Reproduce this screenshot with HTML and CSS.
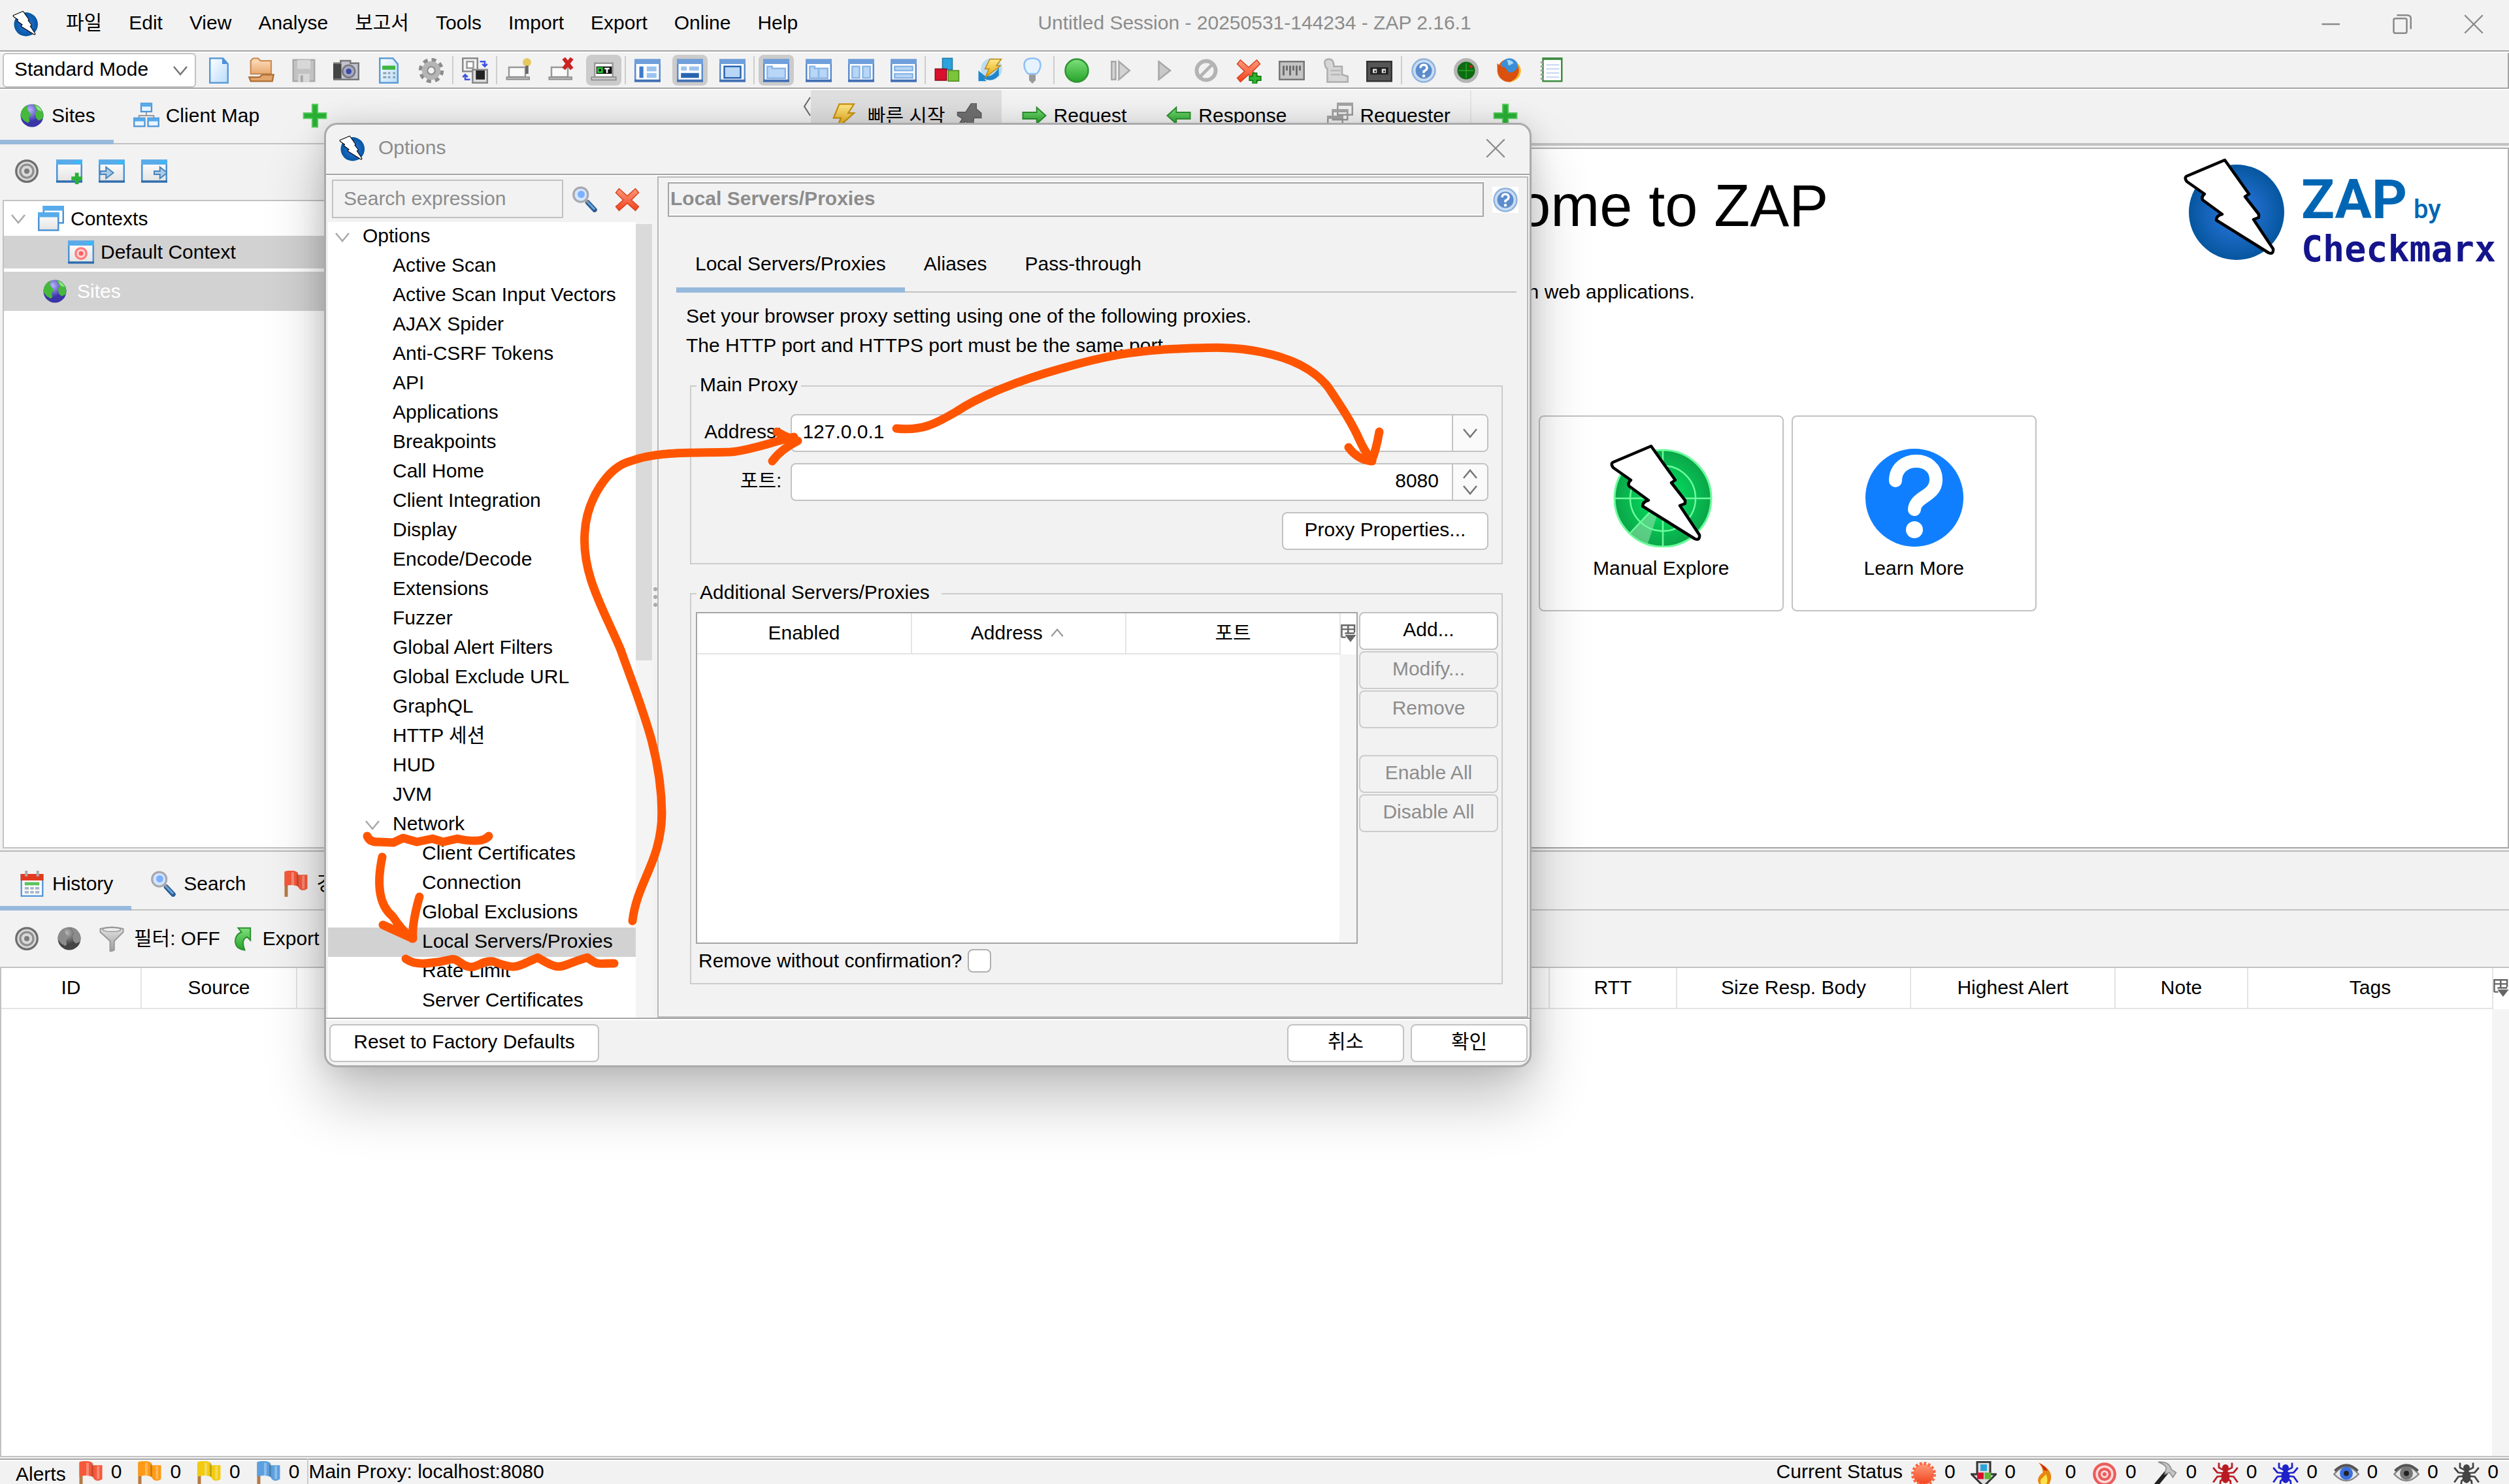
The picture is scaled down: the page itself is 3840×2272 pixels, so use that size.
FILE: index.html
```html
<!DOCTYPE html>
<html lang="ko">
<head>
<meta charset="utf-8">
<title>Untitled Session - 20250531-144234 - ZAP 2.16.1</title>
<link rel="stylesheet" href="styles.css">
</head>
<body>
<svg class="sprite" width="0" height="0" aria-hidden="true">
  <defs>
    <radialGradient id="g-blue"><stop offset="0" stop-color="#2f7be6"/><stop offset="1" stop-color="#05569f"/></radialGradient>
    <radialGradient id="g-radar"><stop offset="0" stop-color="#00ee66"/><stop offset="1" stop-color="#0ba548"/></radialGradient>
    <linearGradient id="g-page" x2="1" y2="1"><stop offset="0" stop-color="#fff"/><stop offset="1" stop-color="#b9dcfb"/></linearGradient>
    <linearGradient id="g-win" y2="1" x2="0"><stop offset="0" stop-color="#fff"/><stop offset="1" stop-color="#e3e3e3"/></linearGradient>
    <linearGradient id="g-green" y2="1" x2="0"><stop offset="0" stop-color="#7ee07a"/><stop offset="1" stop-color="#26a32a"/></linearGradient>
    <linearGradient id="g-gold" y2="1" x2="0"><stop offset="0" stop-color="#ffe98a"/><stop offset="1" stop-color="#e3a008"/></linearGradient>
    <linearGradient id="g-red" y2="1" x2="0"><stop offset="0" stop-color="#ff9a7a"/><stop offset="1" stop-color="#f0421c"/></linearGradient>
    <linearGradient id="g-gray" y2="1" x2="0"><stop offset="0" stop-color="#e4e4e4"/><stop offset="1" stop-color="#9c9c9c"/></linearGradient>
    <linearGradient id="g-folder" y2="1" x2="0"><stop offset="0" stop-color="#ffe0c0"/><stop offset="1" stop-color="#e8a970"/></linearGradient>
    <radialGradient id="g-globe" cx=".4" cy=".25"><stop offset="0" stop-color="#b9b4ff"/><stop offset="1" stop-color="#3a34a8"/></radialGradient>
    <radialGradient id="g-gglobe" cx=".4" cy=".25"><stop offset="0" stop-color="#b8b8b8"/><stop offset="1" stop-color="#444"/></radialGradient>
  </defs>
  <symbol id="bolt" viewBox="0 0 160 160"><path d="M65 5 6 30Q3 33 7 38L34 57Q29 61 31 66L61 88Q52 90 52 97L132 147Q140 150 139 141L109 96 117 93 117 88 96 61 102 57Z" fill="#fff" stroke="#000" stroke-width="4.5" stroke-linejoin="round"/></symbol>
  <symbol id="zap" viewBox="0 0 160 160"><circle cx="83" cy="85" r="73" fill="url(#g-blue)"/><use href="#bolt" width="160" height="160"/></symbol>
  <symbol id="explore" viewBox="0 0 160 160"><circle cx="83" cy="85" r="74" fill="url(#g-radar)" stroke="#6dfc9d" stroke-width="3"/><path d="M83 85 34 138A73 73 0 0 0 60 154Z" fill="#8fe0a8" opacity=".6"/><g fill="none" stroke="#6dfc9d" stroke-width="2.5"><circle cx="83" cy="85" r="50"/><path d="M9 85h148M83 11v148M83 85 33 138"/></g><use href="#bolt" width="160" height="160"/></symbol>
  <symbol id="learn" viewBox="0 0 160 160"><circle cx="81" cy="84" r="75" fill="#0f7fff"/><path d="M52 58C52 18 116 18 114 58C113 82 82 82 81 102" fill="none" stroke="#fff" stroke-width="20" stroke-linecap="round"/><circle cx="81" cy="133" r="13" fill="#fff"/></symbol>

  <symbol id="doc" viewBox="0 0 16 16"><path d="M2.500.5h8l3 3.500v11.500h-11z" fill="url(#g-page)" stroke="#5b9bd8"/><path d="M10 .5 13.500 4H10z" fill="#4a90d9"/></symbol>
  <symbol id="open" viewBox="0 0 16 16"><path d="M1.500 10V2l1.500-1.500h3L7.500 2h6.500v8z" fill="url(#g-folder)" stroke="#c98d55" stroke-width=".9"/><path d="M.5 12h6.500l1.500-1.500h7l-.8 4H1.500z" fill="#e2a56c" stroke="#ad6d35" stroke-width=".9"/></symbol>
  <symbol id="save" viewBox="0 0 16 16"><path d="M1.500 1.500h13v13h-13z" fill="#c2c2c2" stroke="#a9a9a9"/><path d="M4 1.500h8V7H4zM4.500 10h7v5h-7z" fill="#d8d8d8"/><path d="M6 11h1.500v4H6z" fill="#a5a5a5"/></symbol>
  <symbol id="camera" viewBox="0 0 16 16"><path d="M.5 3.500h4V2h6v1.500h5v10H.5z" fill="#c2c2d0" stroke="#777"/><path d="M0 4h5v9H0z" fill="#444"/><circle cx="9.500" cy="8.500" r="3.800" fill="#a5a8c4" stroke="#777"/><circle cx="9.500" cy="8.500" r="1.700" fill="#3a4aa5"/></symbol>
  <symbol id="sheet" viewBox="0 0 16 16"><path d="M2.500.5h8l3 3.500v11.500h-11z" fill="url(#g-page)" stroke="#5b9bd8"/><path d="M4 5h8v2.500H4z" fill="#3fb73f"/><path d="M4.500 9h2v1.200h-2zm3 0h1.500v1.200H7.500zm3 0H12v1.200h-1.500zm-6 2.500h2v1.200h-2zm3 0h1.500v1.200H7.500zm3 0H12v1.200h-1.500z" fill="#8aa0ad"/></symbol>
  <symbol id="gear" viewBox="0 0 16 16"><circle cx="8" cy="8" r="6.200" fill="none" stroke="#8c8c8c" stroke-width="3" stroke-dasharray="2.600 2.270"/><circle cx="8" cy="8" r="4" fill="none" stroke="#b5b5b5" stroke-width="3.400"/><circle cx="8" cy="8" r="2.300" fill="#f2f2f2" stroke="#888" stroke-width=".8"/></symbol>
  <symbol id="swap" viewBox="0 0 16 16"><path d="M.5.5h9v8h-9z" fill="#f4f4f4" stroke="#888"/><path d="M3 2.500h4v4H3z" fill="#fff" stroke="#999"/><path d="M6.500 7.500h9v8h-9z" fill="#ddd" stroke="#888"/><path d="M8.500 8h5.500v5.500H8.500z" fill="#222"/><path d="M11 2.500h3v2.500m-1.500-1 1.500 1.500L15.500 4M5 13.500H2V11M.5 12 2 10.500 3.500 12" fill="none" stroke="#3b55e0"/></symbol>
  <symbol id="host" viewBox="0 0 16 16"><path d="M2 6h10v6H2z" fill="#fafafa" stroke="#999"/><path d="M.5 12h14v1.500H.5z" fill="#b5b5b5" stroke="#888" stroke-width=".6"/></symbol>
  <symbol id="host-new" viewBox="0 0 16 16"><use href="#host"/><circle cx="13" cy="3" r="2.600" fill="#e6c860"/><path d="M13 5v5" stroke="#666" stroke-width="1.800"/></symbol>
  <symbol id="host-del" viewBox="0 0 16 16"><use href="#host"/><path d="m9.500.5 5 6.500m0-6.500-5 6.500" stroke="#cc2222" stroke-width="2.400"/></symbol>
  <symbol id="host-ot" viewBox="0 0 16 16"><path d="M2.500 3.500h11V12h-11z" fill="#fff" stroke="#999"/><path d="M.5 12h15v1.800H.5z" fill="#c5c5c5" stroke="#888" stroke-width=".6"/><path d="M3.500 5.500h9.500v4.500H3.500z" fill="#111"/><path d="M4.500 6.500H7V9H4.500z" fill="none" stroke="#1fd02f"/><path d="M8.500 6.800h3M10 6.500V9.500" stroke="#fff"/></symbol>
  <symbol id="win" viewBox="0 0 16 16"><path d="M.5 1.500h15v13H.5z" fill="#fff" stroke="#5b8ccc"/><path d="M0 1h16v3H0z" fill="#6f9fdb"/><path d="M0 13.500h16V15H0z" fill="#4470b5"/></symbol>
  <symbol id="lay1" viewBox="0 0 16 16"><use href="#win"/><path d="M3 5.500h2.500v7H3z" fill="#3f7ccb"/><path d="M7.500 5.500h6v3h-6zm0 4h6v3h-6z" fill="#9cc3ee"/></symbol>
  <symbol id="lay2" viewBox="0 0 16 16"><use href="#win"/><path d="M2.500 9.500h11v3h-11z" fill="#2865b0"/><path d="M2.500 5.500H6V8H2.500zm5 0h6V8h-6z" fill="#9cc3ee"/></symbol>
  <symbol id="lay3" viewBox="0 0 16 16"><use href="#win"/><path d="M3 5.500h10v7H3z" fill="#b8d6f5" stroke="#2865b0"/></symbol>
  <symbol id="lay4" viewBox="0 0 16 16"><use href="#win"/><path d="M2.500 5.500h3v1.200h8v6h-11z" fill="#b8d6f5" stroke="#8ab6e8"/></symbol>
  <symbol id="lay5" viewBox="0 0 16 16"><use href="#win"/><path d="M2.500 5.500h3v1.200h8v6h-11zM8 7v5.500" fill="#b8d6f5" stroke="#8ab6e8"/></symbol>
  <symbol id="lay6" viewBox="0 0 16 16"><use href="#win"/><path d="M2.500 5.500H7v7H2.500zm6.500 0h4.500v7H9z" fill="#b8d6f5" stroke="#8ab6e8"/></symbol>
  <symbol id="lay7" viewBox="0 0 16 16"><use href="#win"/><path d="M2.500 5.500h11v2.500h-11zm0 4.500h11v2.500h-11z" fill="#b8d6f5" stroke="#8ab6e8"/></symbol>
  <symbol id="blocks" viewBox="0 0 16 16"><path d="M5 .5h6v7H5z" fill="#2ba3dd" stroke="#1a76a8" stroke-width=".6"/><path d="M.5 7H7.500v7H.5z" fill="#d8102c" stroke="#8c0a1c" stroke-width=".6"/><path d="M8.500 8H15v6.500H8.500z" fill="#7cc43a" stroke="#4f8a1e" stroke-width=".6"/></symbol>
  <symbol id="update" viewBox="0 0 16 16"><circle cx="9" cy="7" r="6.500" fill="#bcdcf3"/><path d="M1 8v6.500h5L4.500 13q5 2.500 9-2V6q-4 7-9 5z" fill="#1f86cf"/><path d="M8 1h7l-3 4h2.500L5 12.500 7.500 7H5z" fill="url(#g-gold)" stroke="#b78912" stroke-width=".6"/></symbol>
  <symbol id="bulb" viewBox="0 0 16 16"><path d="M8 .5c7 0 5.500 7 2.500 9.500h-5C2.500 7.500 1 .5 8 .5z" fill="#e6f3ff" stroke="#8ec0f4"/><path d="M6 10.500h4v3.500l-2 2-2-2z" fill="#999"/></symbol>
  <symbol id="dot" viewBox="0 0 16 16"><circle cx="8" cy="8" r="7" fill="url(#g-green)" stroke="#2f9433"/></symbol>
  <symbol id="step" viewBox="0 0 16 16"><path d="M2.500 2.500H5v11H2.500zM7 2.500 13.500 8 7 13.500z" fill="#d3d3d3" stroke="#a8a8a8"/></symbol>
  <symbol id="play" viewBox="0 0 16 16"><path d="M5 2.500 12 8l-7 5.500z" fill="#c9c9c9" stroke="#a8a8a8"/></symbol>
  <symbol id="ban" viewBox="0 0 16 16"><circle cx="8" cy="8" r="5.800" fill="none" stroke="#b3b3b3" stroke-width="2.400"/><path d="M4.500 11.500l7-7" stroke="#b3b3b3" stroke-width="2"/></symbol>
  <symbol id="cross" viewBox="0 0 16 16"><path d="M3 1.500 8 6l5-4.500L15 4l-4.500 4.500L15 12.500 13 15l-5-4.500L3 15l-2-2.500 4.500-4L1 4z" fill="url(#g-red)" stroke="#d9401f" stroke-width=".6"/></symbol>
  <symbol id="cross-add" viewBox="0 0 16 16"><use href="#cross"/><path d="M10.500 9.500h2.500v2h2.500V14H13v2h-2.500v-2H8.500v-2.500h2z" fill="#2fb52f" stroke="#117d11" stroke-width=".7"/></symbol>
  <symbol id="keyb" viewBox="0 0 16 16"><path d="M.5 2.500h15v11H.5z" fill="#c4c4c4" stroke="#777"/><path d="M3 5v6M5 5v3M7 5v6M9 5v3M11 5v6M13 5v3" stroke="#666" stroke-width="1.100"/></symbol>
  <symbol id="scroll" viewBox="0 0 16 16"><path d="M2 6Q0 1 4 1q3 0 3 4.500h5v5l3.500 1V15H3V7z" fill="#d6d6d6" stroke="#adadad"/><path d="M5 8h6M5 10.500h6" stroke="#b8b8b8"/></symbol>
  <symbol id="tape" viewBox="0 0 16 16"><path d="M.5 2.500h15v12H.5z" fill="#555" stroke="#333"/><path d="M2.500 6h11v4.500h-11z" fill="#222"/><path d="M4 7h2.500v2.500H4zm5.500 0H12v2.500H9.500z" fill="#ddd"/><path d="M5 8h1v1H5zm5.500 0h1v1h-1z" fill="#222"/></symbol>
  <symbol id="help" viewBox="0 0 16 16"><circle cx="8" cy="8" r="7" fill="#c9dcf2" stroke="#8fb2dc"/><circle cx="8" cy="8" r="5" fill="#5b8ccc"/><path d="M6 6.500q0-2 2-2t2 2Q10 7.500 8 8.500v1" fill="none" stroke="#fff" stroke-width="1.400"/><circle cx="8" cy="11.300" r=".9" fill="#fff"/></symbol>
  <symbol id="radar" viewBox="0 0 16 16"><circle cx="8" cy="8" r="6.500" fill="#0d6b12" stroke="#b5b5b5" stroke-width="2.200"/><path d="M3.500 8h9M8 3.500v9" stroke="#2ba62b" stroke-width=".6"/><circle cx="11" cy="5.500" r=".9" fill="#e01818"/></symbol>
  <symbol id="firefox" viewBox="0 0 16 16"><circle cx="8" cy="8" r="7" fill="#e2661b"/><circle cx="8.500" cy="5.800" r="5.300" fill="#3b8fd8"/><path d="M7 1.500q3 0 4 2L8 5z" fill="#a8d8f8"/><path d="M1 3.500Q3 6 5.500 6L8 9q3 1 5.500-3Q16 12 9 15 .5 14 1 3.500z" fill="#d9500f"/><path d="M13 3.500q3 5-1 9.500l-3 2q6-1 6.500-7 0-3-2.500-4.500z" fill="#f9b423"/></symbol>
  <symbol id="note" viewBox="0 0 16 16"><path d="M3 .5h11.500v14H3z" fill="#fff" stroke="#3d8b40"/><path d="M3 .5h11.500v1H3z" fill="#3d8b40"/><path d="M5 4.500h8M5 7h8M5 9.500h8M5 12h8" stroke="#cfdcf3"/><path d="M1.500 3h2m-2 2.500h2m-2 2.500h2m-2 2.500h2m-2 2.500h2" stroke="#999"/></symbol>
  <symbol id="globe" viewBox="0 0 16 16"><circle cx="8" cy="8" r="7" fill="url(#g-globe)"/><path d="M5.500 1.500 5 4l2.500 3.500L6 9l.5 2.500L5.500 12.500 3 11 1 8.500Q1 3 5.500 1.500zM9 1q5 1 6 6.500L14.500 10 12 11 10.500 9.500 10 6.500 11 5z" fill="#46b83c"/><path d="M10 1.700q3 1 4 3.800l-2.500-1z" fill="#92e88a"/></symbol>
  <symbol id="gglobe" viewBox="0 0 16 16"><circle cx="8" cy="8" r="7" fill="url(#g-gglobe)"/><path d="M5.500 1.500 5 4l2.500 3.500L6 9l.5 2.500L5.500 12.500 3 11 1 8.500Q1 3 5.500 1.500zM9 1q5 1 6 6.500L14.500 10 12 11 10.500 9.500 10 6.500 11 5z" fill="#8c8c8c"/></symbol>
  <symbol id="map" viewBox="0 0 16 16"><path d="M3.500 10V8h9v2M8 5.500V8" fill="none" stroke="#999" stroke-width=".8"/><g fill="#e8f4fe" stroke="#4b93d6" stroke-width=".9"><path d="M4.800.5h6.400v5H4.800zM.5 9.500h6.500v5h-6.500zm8.500 0h6.500v5h-6.500z"/></g><path d="M4.800.5h6.400v2H4.800zM.5 9.500h6.500v2h-6.500zm8.500 0h6.500v2h-6.500z" fill="#57abea"/></symbol>
  <symbol id="plus" viewBox="0 0 16 16"><path d="M6.300 1h3.400v5.300H15v3.400H9.700V15H6.300V9.700H1V6.300h5.300z" fill="#2ab135" stroke="#5fd068" stroke-width=".7"/></symbol>
  <symbol id="target" viewBox="0 0 16 16"><circle cx="8" cy="8" r="7" fill="#d8d8d8"/><g fill="none" stroke-width="1.300"><circle cx="8" cy="8" r="6.500" stroke="#6e6e6e"/><circle cx="8" cy="8" r="4" stroke="#8e8e8e"/></g><circle cx="8" cy="8" r="1.600" fill="#7c7c7c"/></symbol>
  <symbol id="rtarget" viewBox="0 0 16 16"><circle cx="8" cy="8" r="7" fill="#ffdada"/><g fill="none" stroke-width="1.700" stroke="#ea5c5c"><circle cx="8" cy="8" r="6.300"/><circle cx="8" cy="8" r="3.200"/></g><circle cx="8" cy="8" r="1.200" fill="#ea5c5c"/></symbol>
  <symbol id="pane" viewBox="0 0 16 16"><path d="M.5 1.500h15v13H.5z" fill="url(#g-win)" stroke="#4b93d6"/><path d="M0 1h16v3H0z" fill="#57abea"/><path d="M12 2.500h3" stroke="#19c8ff"/><path d="M0 13.700h16V15H0z" fill="#2d6cab"/></symbol>
  <symbol id="pane-add" viewBox="0 0 16 16"><use href="#pane"/><path d="M11.500 9h2.300v2.300H16v2.300h-2.200V16h-2.300v-2.400H9.300v-2.300h2.200z" fill="#2ab135"/></symbol>
  <symbol id="pane-in" viewBox="0 0 16 16"><use href="#pane"/><path d="M1 8h3.500V5.500L9 9l-4.500 3.500V10H1z" fill="#a9cbe9" stroke="#4b85b8" stroke-width=".8"/></symbol>
  <symbol id="pane-out" viewBox="0 0 16 16"><use href="#pane"/><path d="M8 8h3.500V5.500L16 9l-4.500 3.500V10H8z" fill="#a9cbe9" stroke="#4b85b8" stroke-width=".8"/></symbol>
  <symbol id="pane-target" viewBox="0 0 16 16"><use href="#pane"/><circle cx="8" cy="8.800" r="3.300" fill="#ffd5d5" stroke="#ff7a7a" stroke-width="1.300"/><circle cx="8" cy="8.800" r="1.400" fill="#ff6060"/></symbol>
  <symbol id="panes" viewBox="0 0 16 16"><path d="M3.500.5h12v10h-12z" fill="#fff" stroke="#4b93d6"/><path d="M3 0h13v3H3z" fill="#57abea"/><path d="M.5 4.500h12v10.500H.5z" fill="url(#g-win)" stroke="#4b93d6"/><path d="M0 4h13v3H0z" fill="#57abea"/></symbol>
  <symbol id="flash" viewBox="0 0 16 16"><path d="M5 .5h9L10.500 6H14L3.500 15.500 6 9H1.500z" fill="url(#g-gold)" stroke="#c79110" stroke-width=".9"/></symbol>
  <symbol id="pin" viewBox="0 0 16 16"><path d="M9.500 0h3v3.500L15.500 6v3H11l-.5 4.500H8L6 11l-4.500 4.500L.5 15 4 9.500 1 7.500V5.500h5z" fill="#707070" stroke="#5a5a5a" stroke-width=".6"/></symbol>
  <symbol id="right" viewBox="0 0 16 16"><path d="M1 6h8.500V3L15 8l-5.500 5V10H1z" fill="url(#g-green)" stroke="#2c8f30" stroke-width=".8"/></symbol>
  <symbol id="left" viewBox="0 0 16 16"><path d="M15 6H6.500V3L1 8l5.500 5V10H15z" fill="url(#g-green)" stroke="#2c8f30" stroke-width=".8"/></symbol>
  <symbol id="stack" viewBox="0 0 16 16"><g fill="#f2f2f2" stroke="#999"><path d="M6.500.5h9v7h-9zM3.500 4.500h9v6h-9zM.5 8.500h9v6h-9z"/></g><path d="M6 0h10v2H6zM3 4h10v2H3zM0 8h10v2H0z" fill="#a5a5a5"/></symbol>
  <symbol id="lens" viewBox="0 0 16 16"><path d="m9.800 10 4.200 4.500" stroke="#2c5c93" stroke-width="3" stroke-linecap="round"/><path d="m10 10 4 4.200" stroke="#6aa6dc" stroke-width="1.200"/><path d="m8.500 8.500 1.500 1.500" stroke="#999" stroke-width="1.500"/><circle cx="5.500" cy="5.200" r="4.400" fill="#d3e6ff" stroke="#a8a8b0" stroke-width="1.300"/><circle cx="5.800" cy="5" r="2.200" fill="#7db0ff"/></symbol>
  <symbol id="calendar" viewBox="0 0 16 16"><path d="M1.500 2.500h13v13h-13z" fill="#fff" stroke="#5b9bd8"/><path d="M1 2h14v4H1z" fill="#e23a20"/><path d="M4.500 0v3.500M11.500 0v3.500" stroke="#aaa" stroke-width="1.600"/><path d="M3.500 7h9v2h-9z" fill="#5cc35c"/><path d="M3.500 10h9v4h-9z" fill="#a9b8c8"/><path d="M6.500 9v5m3-5v5M3.500 12h9" stroke="#fff" stroke-width=".8"/></symbol>
  <symbol id="flag" viewBox="0 0 16 16"><path d="M1 1h2v15H1z" fill="#b57b45"/><path d="M1 .5q5-1.500 8 .5v1.500h6V11q-3 2-5 0l-1-1.500Q5 8 1 9.500z" fill="currentColor"/><path d="M6 1v8M12.500 3v8" stroke="#fff" stroke-width="1.600" opacity=".3"/><path d="M9 1.500v8" stroke="#000" opacity=".22"/></symbol>
  <symbol id="funnel" viewBox="0 0 16 16"><path d="M1 2q7-2 14 0v2L9.500 9.500V15L7 16V9.500L1 4z" fill="url(#g-gray)" stroke="#999" stroke-width=".8"/><ellipse cx="8" cy="2.500" rx="5.500" ry="1.200" fill="#eee" stroke="#999" stroke-width=".6"/></symbol>
  <symbol id="share" viewBox="0 0 16 16"><path d="M5 1.500h7.500V9L10.500 7Q6.500 8.500 9 15 2 14 3.500 7.500 4.500 5 7 4z" fill="url(#g-green)" stroke="#2c8f30" stroke-width=".8"/></symbol>
  <symbol id="burst" viewBox="0 0 16 16"><circle cx="8" cy="8" r="6.300" fill="url(#g-red)"/><circle cx="8" cy="8" r="6.600" fill="none" stroke="#f96a44" stroke-width="2" stroke-dasharray="1.500 1.090"/></symbol>
  <symbol id="addon" viewBox="0 0 16 16"><path d="M4 .5h8V8h3.500L8 15.500.5 8H4z" fill="#ddd" stroke="#333" stroke-width="1.200"/><path d="M6 2h4v4H6z" fill="#2ba3dd"/><path d="M4 7h4v4H4z" fill="#d8102c"/><path d="M8.500 7h4v4h-4z" fill="#5eb53a"/></symbol>
  <symbol id="flame" viewBox="0 0 16 16"><path d="M4.500 1Q13 5 12 11q-1 5-4 5t-4-4q0-3 3-5Q7 4 4.500 1z" fill="#e8860e"/><path d="M9 8q2 5-1 7.500Q4.500 14 6 11z" fill="#ffe14a"/><path d="M4.500 1Q9 3 10 6L7.500 5.500Q7 3 4.500 1z" fill="#cc2a10"/></symbol>
  <symbol id="hammer" viewBox="0 0 16 16"><path d="m9 7-7 8.500" stroke="#222" stroke-width="2.600"/><path d="M4 .5q7-.5 8 4.500l3 2-2 3-2-3-3 1 1-4q-1-2-5-3.500z" fill="#c4c4c4" stroke="#8a8a8a" stroke-width=".6"/></symbol>
  <symbol id="spider" viewBox="0 0 16 16"><g fill="none" stroke="currentColor" stroke-width="1.100"><path d="M8 6 4 4V1M8 6l4-2V1M8 7.500 3 7 .5 4M8 7.500 13 7l2.500-3M8 9l-5 .5L.5 13M8 9l5 .5 2.500 3.500M8 10l-3 2-.5 4M8 10l3 2 .5 4"/></g><ellipse cx="8" cy="9.500" rx="2.600" ry="4" fill="currentColor"/><circle cx="8" cy="4" r="2" fill="currentColor"/></symbol>
  <symbol id="eye" viewBox="0 0 16 16"><path d="M.5 8Q8-1 15.500 8 8 16 .5 8z" fill="#e8e8e8" stroke="#888"/><circle cx="8" cy="7.500" r="4" fill="currentColor"/><circle cx="8" cy="7.500" r="1.600" fill="#222"/><path d="M1 6q7-7 14 0" stroke="#555" stroke-width="1.600" fill="none"/></symbol>
  <symbol id="down" viewBox="0 0 16 16"><path d="M3 5l5 6 5-6" fill="none" stroke="currentColor" stroke-width="1.300"/></symbol>
  <symbol id="up" viewBox="0 0 16 16"><path d="M3 11l5-6 5 6" fill="none" stroke="currentColor" stroke-width="1.300"/></symbol>
  <symbol id="close" viewBox="0 0 16 16"><path d="M2.500 2.500l11 11m0-11-11 11" stroke="currentColor" stroke-width=".9"/></symbol>
  <symbol id="cols" viewBox="0 0 10 11"><path d="M.5 8V.5h8V5M.5 3h8M4.500.5V5.500M.5 8H3M2.500 5.500h6" fill="none" stroke="#666"/><path d="M2.500 6.500h7L6 11z" fill="#666"/></symbol>
</svg>

<header class="titlebar">
  <div class="title-left">
    <svg class="ico app-icon"><use href="#zap"/></svg>
    <nav class="menu" aria-label="Menu">
      <button>파일</button><button>Edit</button><button>View</button><button>Analyse</button><button>보고서</button><button>Tools</button><button>Import</button><button>Export</button><button>Online</button><button>Help</button>
    </nav>
  </div>
  <div class="window-title">Untitled Session - 20250531-144234 - ZAP 2.16.1</div>
  <div class="window-controls">
    <button aria-label="Minimize"><svg class="glyph" viewBox="0 0 16 16"><path d="M3 8h11" stroke="#888"/></svg></button>
    <button aria-label="Restore"><svg class="glyph" viewBox="0 0 16 16"><path d="M3 5.500q0-1 1-1h6q1 0 1 1v7q0 1-1 1H4q-1 0-1-1zM5 2.500h6q2.500 0 2.500 2V11" fill="none" stroke="#888"/></svg></button>
    <button aria-label="Close"><svg class="glyph"><use href="#close"/></svg></button>
  </div>
</header>

<div class="toolbar" role="toolbar">
  <div class="mode"><select aria-label="Mode"><option>Standard Mode</option></select><svg class="chev"><use href="#down"/></svg></div>
  <button aria-label="New Session"><svg class="ico"><use href="#doc"/></svg></button>
  <button aria-label="Open Session"><svg class="ico"><use href="#open"/></svg></button>
  <button aria-label="Persist Session" disabled><svg class="ico"><use href="#save"/></svg></button>
  <button aria-label="Snapshot"><svg class="ico"><use href="#camera"/></svg></button>
  <button aria-label="Session Properties"><svg class="ico"><use href="#sheet"/></svg></button>
  <button aria-label="Options"><svg class="ico"><use href="#gear"/></svg></button>
  <i></i>
  <button aria-label="Policy"><svg class="ico"><use href="#swap"/></svg></button>
  <i></i>
  <button aria-label="New Host"><svg class="ico"><use href="#host-new"/></svg></button>
  <button aria-label="Remove Host"><svg class="ico"><use href="#host-del"/></svg></button>
  <button aria-label="OAST" class="on"><svg class="ico"><use href="#host-ot"/></svg></button>
  <i></i>
  <button aria-label="Expand Sites"><svg class="ico"><use href="#lay1"/></svg></button>
  <button aria-label="Expand Information" class="on"><svg class="ico"><use href="#lay2"/></svg></button>
  <button aria-label="Full Layout"><svg class="ico"><use href="#lay3"/></svg></button>
  <i></i>
  <button aria-label="Tabbed" class="on"><svg class="ico"><use href="#lay4"/></svg></button>
  <button aria-label="Tabs Side by Side"><svg class="ico"><use href="#lay5"/></svg></button>
  <button aria-label="Side by Side"><svg class="ico"><use href="#lay6"/></svg></button>
  <button aria-label="Stacked"><svg class="ico"><use href="#lay7"/></svg></button>
  <i></i>
  <button aria-label="Manage Add-ons"><svg class="ico"><use href="#blocks"/></svg></button>
  <button aria-label="Check for Updates"><svg class="ico"><use href="#update"/></svg></button>
  <button aria-label="Tips"><svg class="ico"><use href="#bulb"/></svg></button>
  <i></i>
  <button aria-label="Break" class="mid"><svg class="ico"><use href="#dot"/></svg></button>
  <button aria-label="Step" class="mid"><svg class="ico"><use href="#step"/></svg></button>
  <button aria-label="Continue"><svg class="ico"><use href="#play"/></svg></button>
  <button aria-label="Drop"><svg class="ico"><use href="#ban"/></svg></button>
  <button aria-label="Add Breakpoint"><svg class="ico"><use href="#cross-add"/></svg></button>
  <button aria-label="Keyboard" class="mid"><svg class="ico"><use href="#keyb"/></svg></button>
  <button aria-label="Script" class="mid"><svg class="ico"><use href="#scroll"/></svg></button>
  <button aria-label="Record" class="mid"><svg class="ico"><use href="#tape"/></svg></button>
  <i></i>
  <button aria-label="Help"><svg class="ico"><use href="#help"/></svg></button>
  <button aria-label="HUD"><svg class="ico"><use href="#radar"/></svg></button>
  <button aria-label="Open Browser"><svg class="ico"><use href="#firefox"/></svg></button>
  <button aria-label="Notes"><svg class="ico"><use href="#note"/></svg></button>
</div>

<main class="upper">
  <section class="sites">
    <div class="tabs">
      <button class="tab active"><svg class="ico"><use href="#globe"/></svg>Sites</button>
      <button class="tab"><svg class="ico"><use href="#map"/></svg>Client Map</button>
      <button class="tab add" aria-label="Add tab"><svg class="ico"><use href="#plus"/></svg></button>
    </div>
    <div class="pane-tools">
      <button aria-label="Scope"><svg class="ico"><use href="#target"/></svg></button>
      <button aria-label="New Context"><svg class="ico"><use href="#pane-add"/></svg></button>
      <button aria-label="Import Context"><svg class="ico"><use href="#pane-in"/></svg></button>
      <button aria-label="Export Context"><svg class="ico"><use href="#pane-out"/></svg></button>
    </div>
    <div class="site-tree">
      <div class="ctx"><svg class="chev"><use href="#down"/></svg><svg class="ico"><use href="#panes"/></svg>Contexts</div>
      <div class="ctx child"><svg class="ico"><use href="#pane-target"/></svg>Default Context</div>
      <div class="ctx root"><svg class="ico"><use href="#globe"/></svg>Sites</div>
    </div>
  </section>
  <section class="work">
    <div class="tabs work-tabs">
      <svg class="scroll-left" viewBox="0 0 12 32"><path d="M11 2 2 16l9 14" fill="none" stroke="#666" stroke-width="2"/></svg>
      <button class="tab pinned"><svg class="ico"><use href="#flash"/></svg>빠른 시작<svg class="ico"><use href="#pin"/></svg></button>
      <button class="tab"><svg class="ico"><use href="#right"/></svg>Request</button>
      <button class="tab"><svg class="ico"><use href="#left"/></svg>Response</button>
      <button class="tab last"><svg class="ico"><use href="#stack"/></svg>Requester</button>
      <button class="tab add" aria-label="Add tab"><svg class="ico"><use href="#plus"/></svg></button>
    </div>
    <div class="welcome">
      <div class="intro">
        <h1>Welcome to ZAP</h1>
        <p>ZAP is an easy to use integrated penetration testing tool for finding vulnerabilities in web applications.</p>
      </div>
      <div class="brand">
        <svg class="brand-mark"><use href="#zap"/></svg>
        <div class="brand-text">
          <div class="brand-zap">ZAP<span>by</span></div>
          <div class="brand-cx">Checkmarx</div>
        </div>
      </div>
      <div class="cards">
        <button class="card"><svg><use href="#explore"/></svg>Manual Explore</button>
        <button class="card"><svg><use href="#learn"/></svg>Learn More</button>
      </div>
    </div>
  </section>
</main>

<section class="lower">
  <div class="tabs">
    <button class="tab active"><svg class="ico"><use href="#calendar"/></svg>History</button>
    <button class="tab"><svg class="ico"><use href="#lens"/></svg>Search</button>
    <button class="tab"><svg class="ico red"><use href="#flag"/></svg>경고</button>
  </div>
  <div class="pane-tools history-tools">
    <button aria-label="Scope"><svg class="ico"><use href="#target"/></svg></button>
    <button aria-label="Sites"><svg class="ico"><use href="#gglobe"/></svg></button>
    <button class="labelled"><svg class="ico"><use href="#funnel"/></svg>필터: OFF</button>
    <button class="labelled"><svg class="ico"><use href="#share"/></svg>Export</button>
  </div>
  <div class="history">
    <table>
      <colgroup><col class="c-id"><col class="c-src"><col><col class="c-rtt"><col class="c-size"><col class="c-alert"><col class="c-note"><col class="c-tags"><col class="c-corner"></colgroup>
      <thead><tr><th>ID</th><th>Source</th><th>URL</th><th>RTT</th><th>Size Resp. Body</th><th>Highest Alert</th><th>Note</th><th>Tags</th><th class="corner"><svg class="cols"><use href="#cols"/></svg></th></tr></thead>
    </table>
    <div class="track"></div>
  </div>
</section>

<footer class="status">
  <div class="alerts"><span>Alerts</span>
    <span class="count"><svg class="ico red"><use href="#flag"/></svg>0</span>
    <span class="count"><svg class="ico orange"><use href="#flag"/></svg>0</span>
    <span class="count"><svg class="ico yellow"><use href="#flag"/></svg>0</span>
    <span class="count"><svg class="ico blue"><use href="#flag"/></svg>0</span>
  </div>
  <div class="proxy">Main Proxy: localhost:8080</div>
  <div class="current">Current Status</div>
  <div class="counters">
    <span class="count"><svg class="ico"><use href="#burst"/></svg>0</span>
    <span class="count"><svg class="ico"><use href="#addon"/></svg>0</span>
    <span class="count"><svg class="ico"><use href="#flame"/></svg>0</span>
    <span class="count"><svg class="ico"><use href="#rtarget"/></svg>0</span>
    <span class="count"><svg class="ico"><use href="#hammer"/></svg>0</span>
    <span class="count"><svg class="ico crimson"><use href="#spider"/></svg>0</span>
    <span class="count"><svg class="ico navy"><use href="#spider"/></svg>0</span>
    <span class="count"><svg class="ico iris"><use href="#eye"/></svg>0</span>
    <span class="count"><svg class="ico gray"><use href="#eye"/></svg>0</span>
    <span class="count"><svg class="ico dark"><use href="#spider"/></svg>0</span>
  </div>
</footer>

<div class="dialog" role="dialog" aria-label="Options">
  <div class="dialog-title"><svg class="ico"><use href="#zap"/></svg><span>Options</span><button aria-label="Close"><svg class="glyph"><use href="#close"/></svg></button></div>
  <div class="dialog-body">
    <div class="nav">
      <div class="search">
        <input type="text" placeholder="Search expression" aria-label="Search expression">
        <button aria-label="Search"><svg class="ico"><use href="#lens"/></svg></button>
        <button aria-label="Clear"><svg class="ico"><use href="#cross"/></svg></button>
      </div>
      <div class="nav-scroll">
        <ul class="tree">
          <li class="l0"><svg class="chev"><use href="#down"/></svg>Options</li>
          <li>Active Scan</li><li>Active Scan Input Vectors</li><li>AJAX Spider</li><li>Anti-CSRF Tokens</li><li>API</li><li>Applications</li><li>Breakpoints</li><li>Call Home</li><li>Client Integration</li><li>Display</li><li>Encode/Decode</li><li>Extensions</li><li>Fuzzer</li><li>Global Alert Filters</li><li>Global Exclude URL</li><li>GraphQL</li><li>HTTP 세션</li><li>HUD</li><li>JVM</li>
          <li class="l1"><svg class="chev"><use href="#down"/></svg>Network</li>
          <li class="l2">Client Certificates</li><li class="l2">Connection</li><li class="l2">Global Exclusions</li><li class="l2 selected">Local Servers/Proxies</li><li class="l2">Rate Limit</li><li class="l2">Server Certificates</li>
        </ul>
        <div class="scrollbar"><div class="thumb"></div></div>
      </div>
    </div>
    <div class="grip"><b></b><b></b><b></b></div>
    <div class="panel">
      <div class="panel-head"><h2>Local Servers/Proxies</h2><button aria-label="Help"><svg class="ico"><use href="#help"/></svg></button></div>
      <div class="panel-tabs"><button class="active">Local Servers/Proxies</button><button>Aliases</button><button>Pass-through</button></div>
      <p class="hint">Set your browser proxy setting using one of the following proxies.<br>The HTTP port and HTTPS port must be the same port.</p>
      <fieldset class="main-proxy">
        <legend>Main Proxy</legend>
        <div class="form">
          <label for="addr">Address:</label>
          <div class="field"><select id="addr"><option>127.0.0.1</option></select><span class="side"><svg class="chev"><use href="#down"/></svg></span></div>
          <label for="port">포트:</label>
          <div class="field"><input id="port" type="text" inputmode="numeric" value="8080"><span class="side"><svg class="chev"><use href="#up"/></svg><svg class="chev"><use href="#down"/></svg></span></div>
          <button class="btn props">Proxy Properties...</button>
        </div>
      </fieldset>
      <fieldset class="extra">
        <legend>Additional Servers/Proxies</legend>
        <div class="extra-row">
          <div class="proxy-table">
            <table>
              <colgroup><col><col><col><col class="c-corner"></colgroup>
              <thead><tr><th>Enabled</th><th>Address <svg class="chev"><use href="#up"/></svg></th><th>포트</th><th class="corner"><svg class="cols"><use href="#cols"/></svg></th></tr></thead>
            </table>
            <div class="track"></div>
          </div>
          <div class="actions">
            <button class="btn">Add...</button><button class="btn" disabled>Modify...</button><button class="btn" disabled>Remove</button>
            <button class="btn spaced" disabled>Enable All</button><button class="btn" disabled>Disable All</button>
          </div>
        </div>
        <div class="confirm"><label for="noconfirm">Remove without confirmation?</label><input id="noconfirm" type="checkbox"></div>
      </fieldset>
    </div>
  </div>
  <div class="dialog-foot"><button class="btn reset">Reset to Factory Defaults</button><button class="btn ok">취소</button><button class="btn ok">확인</button></div>
  <svg class="ink" viewBox="496 188 1848 1446" aria-hidden="true">
    <path d="M968 1410C975 1350 1012 1320 1013 1245C1012 1150 980 1080 950 995C925 935 890 880 895 815C898 765 930 715 965 706C1010 690 1060 694 1118 692C1150 689 1180 677 1215 669M1189 661 1200 667 1221 675Q1195 688 1182 706"/>
    <path d="M1372 656C1410 660 1430 650 1464 630C1500 606 1560 582 1625 564C1690 545 1740 536 1804 534C1850 532 1890 530 1930 539C1975 548 2012 566 2033 593C2052 622 2068 645 2080 672C2087 688 2094 698 2100 706M2064 685Q2078 704 2099 706Q2106 690 2111 661"/>
    <path d="M562 1280Q566 1290 580 1289L602 1290 617 1283 638 1289 662 1284 678 1289 700 1284Q738 1292 748 1280"/>
    <path d="M585 1312C577 1350 579 1385 601 1403C612 1420 622 1430 631 1437M586 1416Q608 1426 632 1437Q630 1415 642 1373"/>
    <path d="M621 1468Q635 1478 660 1474C690 1472 690 1464 702 1472C728 1492 730 1470 755 1472C792 1486 790 1480 823 1466C862 1490 855 1478 899 1466C918 1480 915 1474 940 1475"/>
  </svg>
</div>
</body>
</html>
```
FILE: styles.css
```css
* { box-sizing: border-box; }
body, button, input, select, th, legend, h1, h2 {
  font: 30px/40px "Liberation Sans", "Noto Sans CJK KR", sans-serif;
  color: #000;
}
body {
  margin: 0;
  height: 100vh;
  overflow: hidden;
  display: flex;
  flex-direction: column;
  background: #f2f2f2;
  white-space: nowrap;
}
button { border: 0; background: none; padding: 0; margin: 0; }
select, input { border: 0; background: none; appearance: none; margin: 0; outline: 0; }
.sprite { position: absolute; }
.ico { width: 40px; height: 40px; flex: none; display: block; }
.chev { width: 32px; height: 32px; flex: none; color: #777; }
.glyph { width: 40px; height: 40px; display: block; color: #888; }
.cols { width: 25px; height: 27px; display: block; }
.red { color: #f5593a; }
.orange { color: #ff9a14; }
.yellow { color: #f2cb10; }
.blue { color: #5b9fe0; }
.crimson { color: #b81c22; }
.navy { color: #1e22c8; }
.iris { color: #3b6fe0; }
.gray { color: #777; }
.dark { color: #444; }

/* title bar */
.titlebar { height: 77px; flex: none; display: grid; grid-template-columns: 1fr auto 1fr; align-items: center; }
.title-left { display: flex; align-items: center; padding-left: 19px; min-width: 0; }
.titlebar .app-icon { margin-bottom: 5px; }
.menu { display: flex; gap: 41px; padding: 0 0 7px 42px; }
.window-title { color: #8c8c8c; padding-bottom: 7px; }
.window-controls { display: flex; justify-content: flex-end; padding: 0 34px 4px 0; gap: 70px; }

/* main toolbar */
.toolbar {
  height: 61px; flex: none; display: flex; align-items: center; padding-left: 4px;
  border-top: 2px solid #a5a5a5; border-bottom: 2px solid #fff;
  box-shadow: inset 0 2px #fff, inset 0 -2px #a5a5a5, inset -2px 0 #a5a5a5;
}
.toolbar button { width: 54px; height: 47px; margin-right: 11px; border-radius: 8px; display: flex; align-items: center; justify-content: center; flex: none; }
.toolbar .mid { width: 56px; }
.toolbar .on { background: #cbcbcb; }
.toolbar i { width: 2px; height: 43px; background: #cdcdcd; margin-left: -6px; margin-right: 6px; flex: none; }
.mode { width: 296px; height: 53px; border: 2px solid #c2c2c2; border-radius: 6px; background: #fff; display: flex; align-items: center; margin-right: 8px; padding: 0 6px 0 16px; flex: none; }
.mode select { flex: 1; height: 47px; min-width: 0; padding: 0 0 4px; }

/* tabs */
.tabs { display: flex; box-shadow: inset 0 -2px #c2c2c2; height: 83px; flex: none; }
.tab { display: flex; align-items: center; gap: 10px; padding: 0 29px 4px; }
.tab.active { box-shadow: inset 0 -7px #97b9dc; }
.sites .tab { padding: 0 28px 5px 29px; }
.sites .tab + .tab { padding-left: 30px; padding-right: 32px; }
.sites .tab.add { padding-left: 33px; }

/* upper area */
.upper { flex: 1163 1 0; display: flex; min-height: 0; }
.sites { width: 32%; display: flex; flex-direction: column; }
.pane-tools { display: flex; gap: 25px; padding: 17px 21px 20px; height: 85px; flex: none; align-items: center; }
.site-tree { flex: 1; background: #fff; border: 2px solid #c2c2c2; margin-left: 4px; }
.ctx { display: flex; align-items: center; gap: 10px; height: 53px; padding: 0 0 0 6px; }
.ctx .chev { color: #aaa; }
.ctx .ico { margin-left: 4px; }
.ctx.child { background: #d2d2d2; height: 50px; padding-left: 94px; }
.ctx.root { background: #d2d2d2; color: #fff; height: 60px; margin-top: 5px; padding-left: 54px; gap: 14px; }
.work { flex: 1; display: flex; flex-direction: column; min-width: 0; }
.work-tabs { height: 85px; box-shadow: inset 0 -4px #c2c2c2; }
.scroll-left { width: 12px; height: 32px; margin-top: 9px; }
.work-tabs .tab { padding: 0 30px 8px; }
.work-tabs .tab.pinned { background: #dedede; padding: 0 30px 2px 31px; gap: 16px; margin-bottom: 4px; }
.work-tabs .tab.last { border-right: 2px solid #e4e4e4; padding-left: 32px; }
.work-tabs .tab.add { padding-left: 32px; }
.welcome {
  flex: 1; background: #fff; margin-top: 3px; border: 2px solid #b0b0b0; border-left: 0; border-bottom-color: #a5a5a5;
  display: grid; grid-template-columns: 1fr 498px; grid-template-rows: 408px 1fr; position: relative;
}
.intro { padding: 32px 0 0 60px; }
.intro h1 { font-size: 90px; line-height: 110px; margin: 0; padding-left: 836px; }
.intro p { margin: 57px 0 0; width: 1305px; display: flex; justify-content: flex-end; }
.brand { display: flex; gap: 22px; padding-top: 12px; }
.brand-mark { width: 160px; height: 160px; flex: none; }
.brand-zap { font: bold 84px/64px Roboto, sans-serif; color: #0066b3; padding-top: 34px; }
.brand-zap span { font-size: 40px; font-weight: 500; margin-left: 10px; }
.brand-cx { font: bold 55px/56px "DejaVu Sans Mono", monospace; color: #14148c; }
.cards { grid-column: 1 / 3; display: flex; gap: 12px; padding-left: 1126px; }
.card { width: 375px; height: 300px; border: 2px solid #c2c2c2; border-radius: 8px; display: flex; flex-direction: column; align-items: center; justify-content: center; gap: 12px; background: #fff; padding-bottom: 5px; }
.card svg { width: 160px; height: 160px; }

/* lower area */
.lower { flex: 930 1 0; display: flex; flex-direction: column; min-height: 0; border-top: 3px solid #f2f2f2; }
.lower .tabs { height: 92px; box-shadow: inset 0 -2px #c2c2c2, inset 0 2px #b8b8b8; }
.lower .tab { padding: 9px 28px 0 29px; gap: 11px; }
.history-tools { height: 86px; padding: 20px 21px; }
.history-tools .labelled { display: flex; gap: 14px; align-items: center; }
.history-tools .labelled + .labelled { margin-left: -10px; gap: 10px; }
.history { flex: 1; background: #fff; border: 2px solid #c2c2c2; border-right: 0; display: flex; flex-direction: column; align-items: flex-end; }
table { width: 100%; table-layout: fixed; border-collapse: collapse; }
th { height: 62px; padding: 0 0 2px; border-right: 2px solid #e4e4e4; border-bottom: 2px solid #e4e4e4; background: #fff; }
th.corner { border: 0; }
.c-id { width: 214px; }
.c-src { width: 238px; }
.c-rtt { width: 195px; }
.c-size { width: 358px; }
.c-alert { width: 313px; }
.c-note { width: 203px; }
.c-tags { width: 375px; }
.c-corner { width: 25px; }
.track { flex: 1; width: 26px; background: #f4f4f4; }

/* status bar */
.status { height: 41px; flex: none; display: flex; padding: 0 16px 0 24px; border-top: 2px solid #f2f2f2; box-shadow: inset 0 2px #a5a5a5, inset 0 4px #fff; }
.alerts { display: flex; gap: 23px; padding-right: 12px; border-right: 2px solid #ccc; }
.alerts span:first-child { margin-right: -5px; padding-top: 4px; }
.alerts .count { gap: 11px; }
.count { display: flex; gap: 12px; align-items: flex-start; }
.count .ico { margin-top: 4px; }
.current { margin-left: auto; padding-right: 12px; }
.counters { display: flex; justify-content: space-between; width: 900px; }

/* options dialog */
.dialog {
  position: absolute; left: 496px; top: 188px; width: 1848px; height: 1446px;
  border: 3px solid #aaa; border-radius: 20px; background: #f2f2f2; background-clip: padding-box;
  box-shadow: 0 50px 90px rgba(0, 0, 0, .24), 0 0 40px rgba(0, 0, 0, .12);
  display: flex; flex-direction: column;
}
.dialog-title { height: 75px; flex: none; display: flex; align-items: center; padding: 0 32px 4px 20px; color: #8c8c8c; }
.dialog-title span { flex: 1; padding: 0 0 2px 20px; }
.dialog-body { flex: 1; display: flex; border-top: 2px solid #a5a5a5; border-bottom: 2px solid #fff; box-shadow: inset 0 2px #fff, inset 0 -2px #a5a5a5; padding: 2px 0 2px 3px; min-height: 0; }
.nav { width: 498px; display: flex; flex-direction: column; }
.search { display: flex; align-items: center; padding: 5px 6px 6px; }
.search input { width: 354px; height: 59px; border: 2px solid #c2c2c2; padding: 0 16px 2px; }
.search input::placeholder { color: #8c8c8c; }
.search button { margin-left: 13px; }
.search button + button { margin-left: 25px; }
.nav-scroll { flex: 1; display: flex; min-height: 0; }
.tree { flex: 1; margin: 0; padding: 0; list-style: none; background: #fff; line-height: 40px; }
.tree li { height: 45px; padding: 0 0 4px 99px; display: flex; align-items: center; }
.tree .chev { color: #aaa; margin: 4px 15px 0 0; }
.tree .l0 { padding-left: 6px; }
.tree .l1 { padding-left: 52px; }
.tree .l2 { padding-left: 144px; }
.tree .selected { background: #d2d2d2; }
.scrollbar { width: 27px; background: #f4f4f4; padding: 3px 2px 0 0; }
.thumb { height: 668px; background: #dadada; }
.grip { width: 6px; display: flex; flex-direction: column; justify-content: center; gap: 6px; }
.grip b { width: 6px; height: 6px; border-radius: 3px; background: #aaa; }
.panel { flex: 1; border: 2px solid #b8b8b8; margin-right: 2px; display: flex; flex-direction: column; }
.panel-head { display: flex; align-items: center; gap: 13px; padding: 7px 13px 0 14px; }
.panel-head h2 { flex: 1; height: 53px; margin: 0; font-weight: bold; color: #8c8c8c; border: 2px solid #a5a5a5; box-shadow: inset 0 -2px #fff, 0 -2px #fff; line-height: 46px; padding-left: 2px; }
.panel-head button { background: #fff; }
.panel-tabs { display: flex; margin: 28px 16px 0 27px; height: 88px; box-shadow: inset 0 -2px #c2c2c2; }
.panel-tabs button { padding: 0 29px; }
.panel-tabs .active { box-shadow: inset 0 -8px #97b9dc; }
.hint { margin: 13px 0 0 42px; line-height: 45px; }
fieldset { min-width: 0; margin: 0 37px 0 48px; border: 2px solid #ccc; padding: 0; }
legend { padding: 0 5px 4px; line-height: 36px; }
.main-proxy { margin-top: 20px; padding: 23px 20px 20px; }
.main-proxy legend { margin-left: -12px; }
.form { display: grid; grid-template-columns: auto 1fr; gap: 17px 14px; align-items: center; justify-items: end; }
.form label { padding-bottom: 4px; }
.field { width: 100%; height: 58px; display: flex; background: #fff; border: 2px solid #c2c2c2; border-radius: 8px; overflow: hidden; }
.field select, .field input { flex: 1; min-width: 0; height: 54px; padding: 0 20px 5px 16px; }
.field input { text-align: right; }
.side { width: 54px; border-left: 2px solid #c2c2c2; background: #fafafa; display: flex; flex-direction: column; align-items: center; justify-content: center; }
.side .chev + .chev { margin-top: -8px; }
.btn { height: 58px; background: #fff; border: 2px solid #c2c2c2; border-radius: 8px; padding: 0 0 4px; }
.btn:disabled { background: #f2f2f2; color: #8c8c8c; border-color: #ccc; }
.props { grid-column: 2; width: 316px; }
.extra { margin-top: 25px; padding: 8px 5px 8px 7px; }
.extra legend { margin-left: 1px; padding-right: 18px; }
.extra-row { display: flex; gap: 2px; }
.proxy-table { flex: 1; height: 508px; border: 2px solid #a5a5a5; background: #fff; display: flex; flex-direction: column; align-items: flex-end; }
.proxy-table .chev { width: 28px; height: 28px; vertical-align: -4px; color: #999; }
.actions { width: 213px; display: flex; flex-direction: column; gap: 2px; }
.spaced { margin-top: 39px; }
.confirm { height: 52px; display: flex; align-items: center; gap: 8px; padding-left: 4px; }
.confirm input { width: 36px; height: 36px; border: 2px solid #b0b0b0; border-radius: 8px; background: #fff; }
.dialog-foot { height: 69px; flex: none; display: flex; gap: 10px; padding: 6px 3px 0 5px; }
.reset { width: 413px; margin-right: auto; }
.ok { width: 179px; }
.ink { position: absolute; left: -3px; top: -3px; width: 1848px; height: 1446px; fill: none; stroke: #ff5500; stroke-width: 13px; stroke-linecap: round; stroke-linejoin: round; }
```
